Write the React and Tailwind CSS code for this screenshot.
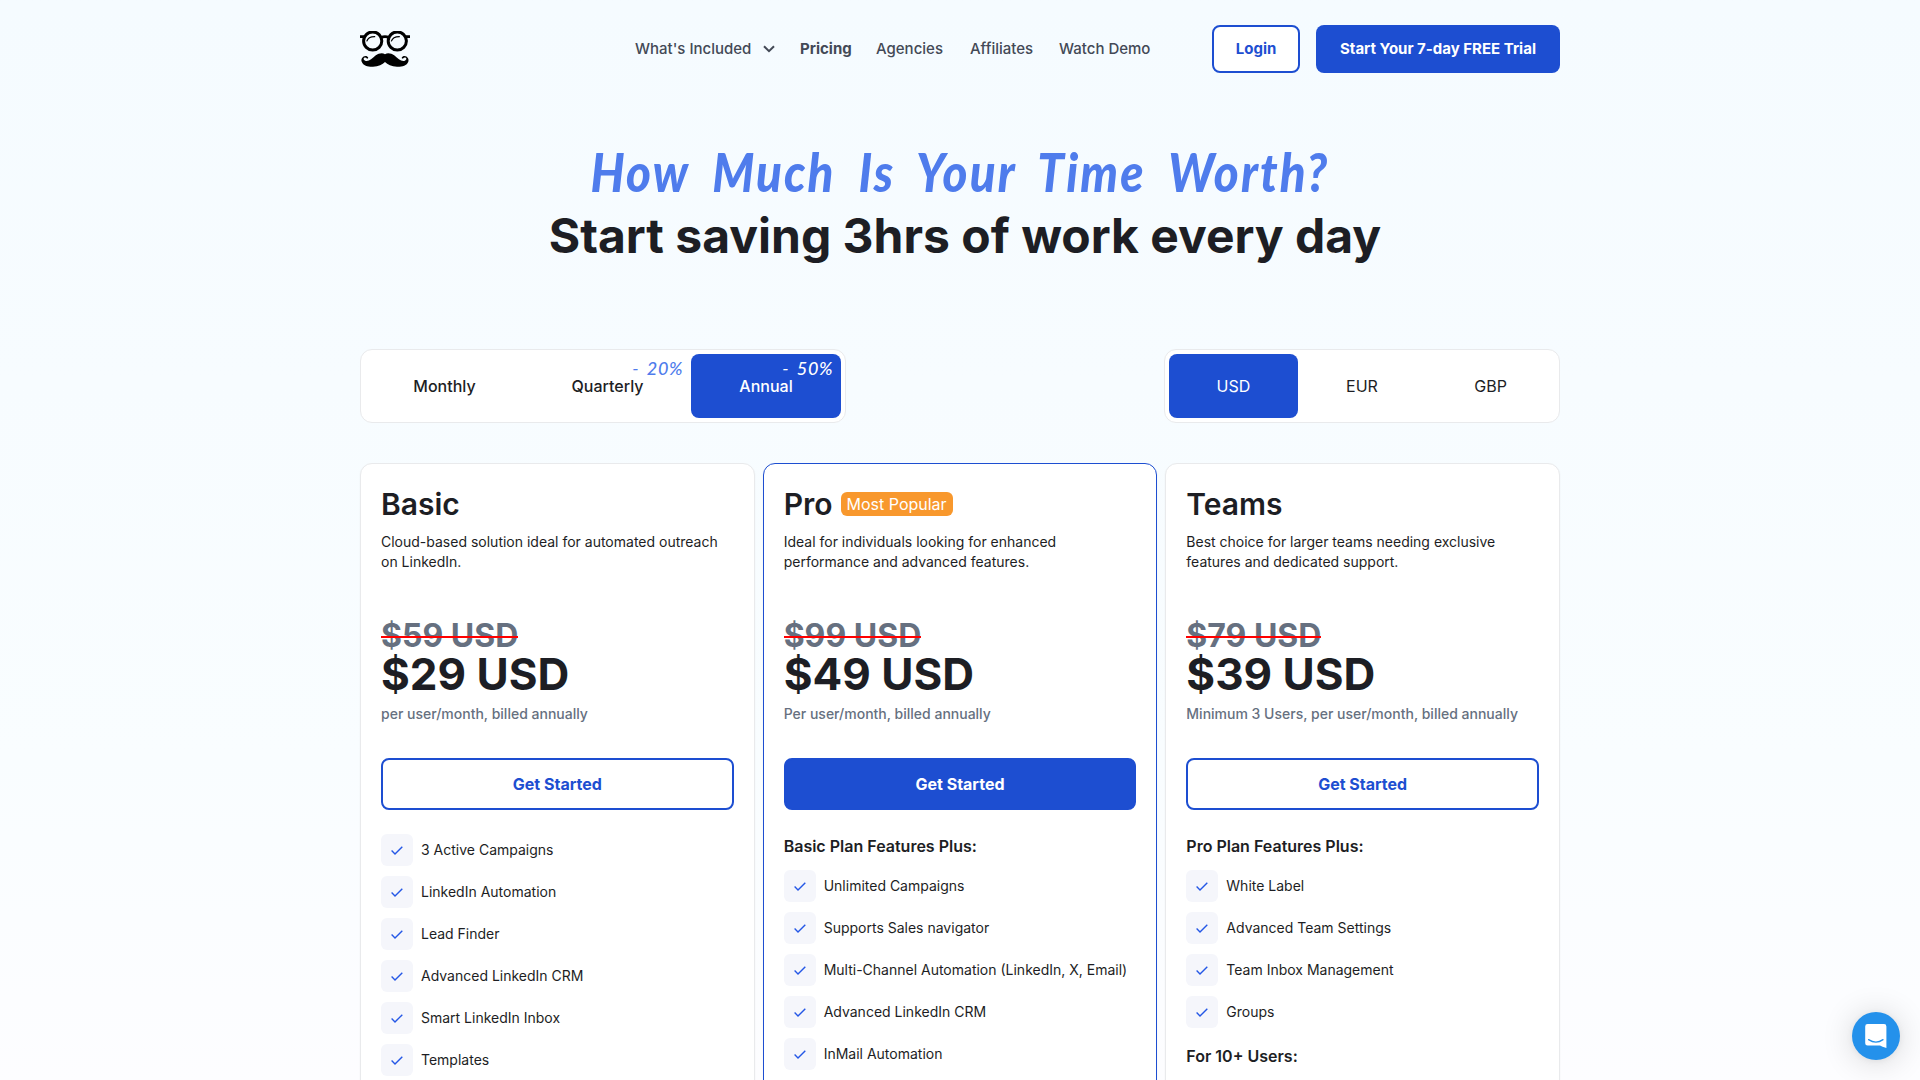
import React from "react";

const plans = [
  {
    name: "Basic",
    desc: "Cloud-based solution ideal for automated outreach on LinkedIn.",
    old: "$59 USD",
    price: "$29 USD",
    note: "per user/month, billed annually",
    features: [
      "3 Active Campaigns",
      "LinkedIn Automation",
      "Lead Finder",
      "Advanced LinkedIn CRM",
      "Smart LinkedIn Inbox",
      "Templates",
    ],
  },
  {
    name: "Pro",
    badge: "Most Popular",
    featured: true,
    desc: "Ideal for individuals looking for enhanced performance and advanced features.",
    old: "$99 USD",
    price: "$49 USD",
    note: "Per user/month, billed annually",
    heading: "Basic Plan Features Plus:",
    features: [
      "Unlimited Campaigns",
      "Supports Sales navigator",
      "Multi-Channel Automation (LinkedIn, X, Email)",
      "Advanced LinkedIn CRM",
      "InMail Automation",
    ],
  },
  {
    name: "Teams",
    desc: "Best choice for larger teams needing exclusive features and dedicated support.",
    old: "$79 USD",
    price: "$39 USD",
    note: "Minimum 3 Users, per user/month, billed annually",
    heading: "Pro Plan Features Plus:",
    features: ["White Label", "Advanced Team Settings", "Team Inbox Management", "Groups"],
    footer: "For 10+ Users:",
  },
];

function Logo() {
  return (
    <svg width="50" height="36" viewBox="0 0 50 36" aria-label="Logo">
      <g fill="none" stroke="#000">
        <circle cx="12.7" cy="10" r="9.1" strokeWidth="3" />
        <circle cx="37.3" cy="10" r="9.1" strokeWidth="3" />
        <path d="M0 5.6H4.5M45.5 5.6H50M21 6.6Q25 4.8 29 6.6" strokeWidth="2.8" />
        <path d="M6.7 10.4Q8.2 5.4 15.2 5.6M31.3 10.4Q32.8 5.4 39.8 5.6" strokeWidth="1.2" />
      </g>
      <path
        d="M25 23.2C27.5 21.6 31 22 34.5 24.6C38 27.5 41.3 31 44.8 29.8C47 29 46.8 26.6 44.8 26.6C43.4 26.6 43.4 28 42.4 27.6C40.8 26.9 42.6 25 44.4 25C47.4 25.1 49.3 28 48.3 30.8C46.8 35 41.5 36 37 35.8C31.5 35.6 27.5 33.5 25 31C22.5 33.5 18.5 35.6 13 35.8C8.5 36 3.2 35 1.7 30.8C.7 28 2.6 25.1 5.6 25C7.4 25 9.2 26.9 7.6 27.6C6.6 28 6.6 26.6 5.2 26.6C3.2 26.6 3 29 5.2 29.8C8.7 31 12 27.5 15.5 24.6C19 22 22.5 21.6 25 23.2Z"
        fill="#000"
      />
    </svg>
  );
}

function Header() {
  return (
    <header className="mx-auto flex h-[98px] w-[1200px] items-center">
      <Logo />
      <nav className="ml-[225px] flex items-center text-[15px] leading-6 font-medium text-[#434956]">
        <a className="flex w-[165px] items-center justify-between pr-[25px]">
          What's Included
          <svg width="12" height="8" viewBox="0 0 12 8" fill="none" stroke="currentColor" strokeWidth="2">
            <path d="M1 1.2L6 6.2L11 1.2" />
          </svg>
        </a>
        <a className="w-[76px] font-bold">Pricing</a>
        <a className="w-[94px]">Agencies</a>
        <a className="w-[89px]">Affiliates</a>
        <a>Watch Demo</a>
      </nav>
      <div className="ml-auto flex gap-4 text-[15px] font-bold">
        <button className="h-12 w-[88px] rounded-lg border-2 border-[#1d4ed1] bg-white text-[#1d4ed1]">Login</button>
        <button className="h-12 w-[244px] rounded-lg bg-[#1d4ed1] text-white">Start Your 7-day FREE Trial</button>
      </div>
    </header>
  );
}

function Discount({ children }) {
  return (
    <span className="absolute top-1 right-2 font-['Lato'] text-[18px] leading-5 tracking-[0.6px] whitespace-nowrap italic [word-spacing:3px]">
      {children}
    </span>
  );
}

function CheckRow({ label }) {
  return (
    <li className="flex h-8 items-center gap-2 text-sm">
      <span className="flex size-8 items-center justify-center rounded-md bg-[#f5f6fb]">
        <svg width="12" height="9" viewBox="0 0 12 9" fill="none" stroke="#2457e6" strokeWidth="1.4">
          <path d="M.6 4.6L4 8L11.3.7" />
        </svg>
      </span>
      {label}
    </li>
  );
}

function Plan({ plan }) {
  return (
    <section
      className={
        "h-[760px] rounded-xl border bg-white p-5 shadow-[0_1px_2px_rgba(16,24,40,0.05)] " +
        (plan.featured ? "border-[#1d4ed1]" : "border-[#e9eaec]")
      }
    >
      <div className="flex h-10 items-center gap-2">
        <h2 className="text-[30px] leading-10 font-semibold">{plan.name}</h2>
        {plan.badge && (
          <span className="h-6 rounded-md bg-[#f8982d] px-1.5 text-base leading-6 text-white">{plan.badge}</span>
        )}
      </div>
      <p className="mt-2 h-[84px] text-sm leading-5">{plan.desc}</p>
      <div className="flex h-10 items-center">
        <div className="relative text-[32px] leading-10 font-bold text-[#667080]">
          {plan.old}
          <span className="absolute inset-x-0 top-5 h-0.5 bg-[#ff0000]" />
        </div>
      </div>
      <div className="-mt-px text-[44px] leading-[38px] font-bold">{plan.price}</div>
      <p className="mt-[11px] h-[54px] text-sm leading-5 font-medium text-[#667080]">{plan.note}</p>
      <button
        className={
          "h-[52px] w-full rounded-lg border-2 border-[#1d4ed1] text-base font-bold " +
          (plan.featured ? "bg-[#1d4ed1] text-white" : "bg-white text-[#1d4ed1]")
        }
      >
        Get Started
      </button>
      {plan.heading && <h3 className="mt-6 text-base leading-6 font-semibold">{plan.heading}</h3>}
      <ul className={"flex flex-col gap-2.5 " + (plan.heading ? "mt-3" : "mt-6")}>
        {plan.features.map((f) => (
          <CheckRow key={f} label={f} />
        ))}
      </ul>
      {plan.footer && <h3 className="mt-4 text-base leading-6 font-semibold">{plan.footer}</h3>}
    </section>
  );
}

export default function App() {
  return (
    <div className="relative h-[1080px] w-[1920px] overflow-hidden bg-linear-to-b from-[#f5fbff] via-[#f9fdff] via-70% to-[#fdfdff] font-['Inter',sans-serif] text-[#1d1e24]">
      <Header />
      <h1 className="mx-auto flex h-[251px] w-[1200px] flex-col items-center pt-[42px]">
        <span className="scale-x-[0.88] font-['Lato'] text-[54px] leading-[64px] font-black tracking-[2.4px] whitespace-nowrap text-[#4f7cec] italic [word-spacing:12px]">
          How Much Is Your Time Worth?
        </span>
        <span className="ml-[10px] pt-[2px] text-[48px] leading-[60px] font-bold whitespace-nowrap">
          Start saving 3hrs of work every day
        </span>
      </h1>
      <main className="mx-auto w-[1200px]">
        <div className="flex h-[74px] justify-between text-base font-medium">
          <div className="flex w-[486px] rounded-xl border border-[#e9eaec] bg-white p-1">
            <button className="w-[159px]">Monthly</button>
            <button className="relative w-[167px]">
              Quarterly
              <span className="text-[#4f7cec]">
                <Discount>- 20%</Discount>
              </span>
            </button>
            <button className="relative w-[150px] rounded-lg bg-[#1d4ed1] text-white">
              Annual
              <Discount>- 50%</Discount>
            </button>
          </div>
          <div className="grid w-[396px] grid-cols-3 rounded-xl border border-[#e9eaec] bg-white p-1 font-normal">
            <button className="rounded-lg bg-[#1d4ed1] text-white">USD</button>
            <button>EUR</button>
            <button>GBP</button>
          </div>
        </div>
        <div className="mt-10 grid grid-cols-3 gap-2">
          {plans.map((p) => (
            <Plan key={p.name} plan={p} />
          ))}
        </div>
      </main>
      <button
        aria-label="Open chat"
        className="absolute right-5 bottom-5 flex size-12 items-center justify-center rounded-full bg-[#2491eb] shadow-[0_2px_32px_rgba(0,0,0,0.16),0_1px_6px_rgba(0,0,0,0.06)]"
      >
        <svg width="24" height="24" viewBox="0 0 24 24">
          <path d="M3.6 0H20Q22.4 0 22.4 2.4V24Q18 22.8 16 21.6H3.6Q1.2 21.6 1.2 19.2V2.4Q1.2 0 3.6 0Z" fill="#fff" />
          <path d="M4.6 15.6Q12 20.6 19 15.6" fill="none" stroke="#2491eb" strokeWidth="1.3" strokeLinecap="round" />
        </svg>
      </button>
    </div>
  );
}
